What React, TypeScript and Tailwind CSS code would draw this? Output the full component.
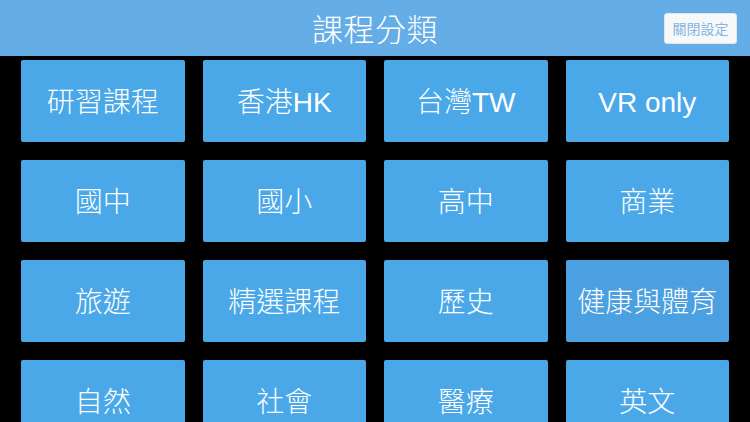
const items = [
  '研習課程', '香港HK', '台灣TW', 'VR only',
  '國中', '國小', '高中', '商業',
  '旅遊', '精選課程', '歷史', '健康與體育',
  '自然', '社會', '醫療', '英文',
];

export default function App() {
  return (
    <div
      className="w-[750px] h-[422px] overflow-hidden bg-black"
      style={{ fontFamily: '"Liberation Sans", "Noto Sans CJK TC", sans-serif' }}
    >
      {/* Header */}
      <header className="h-[56px] bg-[#64ade6] relative flex items-center justify-center">
        <h1 className="pt-[4px] text-[31px] text-white font-light tracking-[0.5px] leading-none">課程分類</h1>
        <button className="absolute right-[13px] top-[13px] w-[73px] h-[31px] bg-[#f6f8fa] border border-[#dfe6ee] rounded-[3px] text-[14px] text-[#86b6df] leading-none">
          關閉設定
        </button>
      </header>

      {/* Category grid */}
      <div className="pt-[4px] pl-[21px]">
        <div className="w-[708px] grid grid-cols-4 auto-rows-[82px] gap-[18px]">
          {items.map((label) => (
            <button
              key={label}
              className={`pt-[4px] rounded-[2px] flex items-center justify-center text-white text-[28px] font-light ${
                label === '健康與體育' ? 'bg-[#4aa0e0]' : 'bg-[#4aa8e8]'
              }`}
            >
              {label}
            </button>
          ))}
        </div>
      </div>
    </div>
  );
}
